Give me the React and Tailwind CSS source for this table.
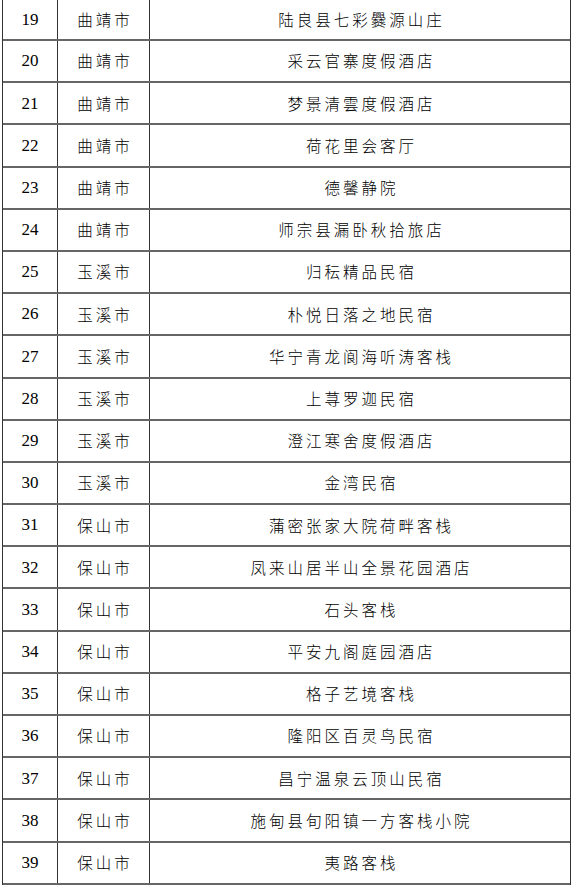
import React from "react";

const rows = [
  ["19", "曲靖市", "陆良县七彩爨源山庄"],
  ["20", "曲靖市", "采云官寨度假酒店"],
  ["21", "曲靖市", "梦景清雲度假酒店"],
  ["22", "曲靖市", "荷花里会客厅"],
  ["23", "曲靖市", "德馨静院"],
  ["24", "曲靖市", "师宗县漏卧秋拾旅店"],
  ["25", "玉溪市", "归秐精品民宿"],
  ["26", "玉溪市", "朴悦日落之地民宿"],
  ["27", "玉溪市", "华宁青龙阆海听涛客栈"],
  ["28", "玉溪市", "上荨罗迦民宿"],
  ["29", "玉溪市", "澄江寒舍度假酒店"],
  ["30", "玉溪市", "金湾民宿"],
  ["31", "保山市", "蒲密张家大院荷畔客栈"],
  ["32", "保山市", "凤来山居半山全景花园酒店"],
  ["33", "保山市", "石头客栈"],
  ["34", "保山市", "平安九阁庭园酒店"],
  ["35", "保山市", "格子艺境客栈"],
  ["36", "保山市", "隆阳区百灵鸟民宿"],
  ["37", "保山市", "昌宁温泉云顶山民宿"],
  ["38", "保山市", "施甸县旬阳镇一方客栈小院"],
  ["39", "保山市", "夷路客栈"],
];

export default function App() {
  return (
    <div className="w-[574px] h-[889px] bg-white overflow-hidden">
      <div className="ml-[2px] w-[569px] border-l border-r border-[#333]">
        {rows.map((r, i) => (
          <div
            key={r[0]}
            className={
              "flex border-b-2 border-[#666] " +
              (i === 0 ? "h-[41px]" : "h-[42.2px]")
            }
          >
            <div
              className="w-[55px] shrink-0 border-r border-[#333] flex items-center justify-center text-[17px] text-black"
              style={{ fontFamily: '"Liberation Serif", serif' }}
            >
              {r[0]}
            </div>
            <div
              className="w-[92px] shrink-0 border-r border-[#333] flex items-center justify-center text-[15.5px] tracking-[3px] pl-[3px] text-black"
              style={{ fontFamily: '"Noto Sans CJK SC", sans-serif', fontWeight: 300 }}
            >
              {r[1]}
            </div>
            <div
              className="flex-1 flex items-center justify-center text-[15.5px] tracking-[3px] pl-[3px] text-black"
              style={{ fontFamily: '"Noto Sans CJK SC", sans-serif', fontWeight: 300 }}
            >
              {r[2]}
            </div>
          </div>
        ))}
      </div>
    </div>
  );
}
